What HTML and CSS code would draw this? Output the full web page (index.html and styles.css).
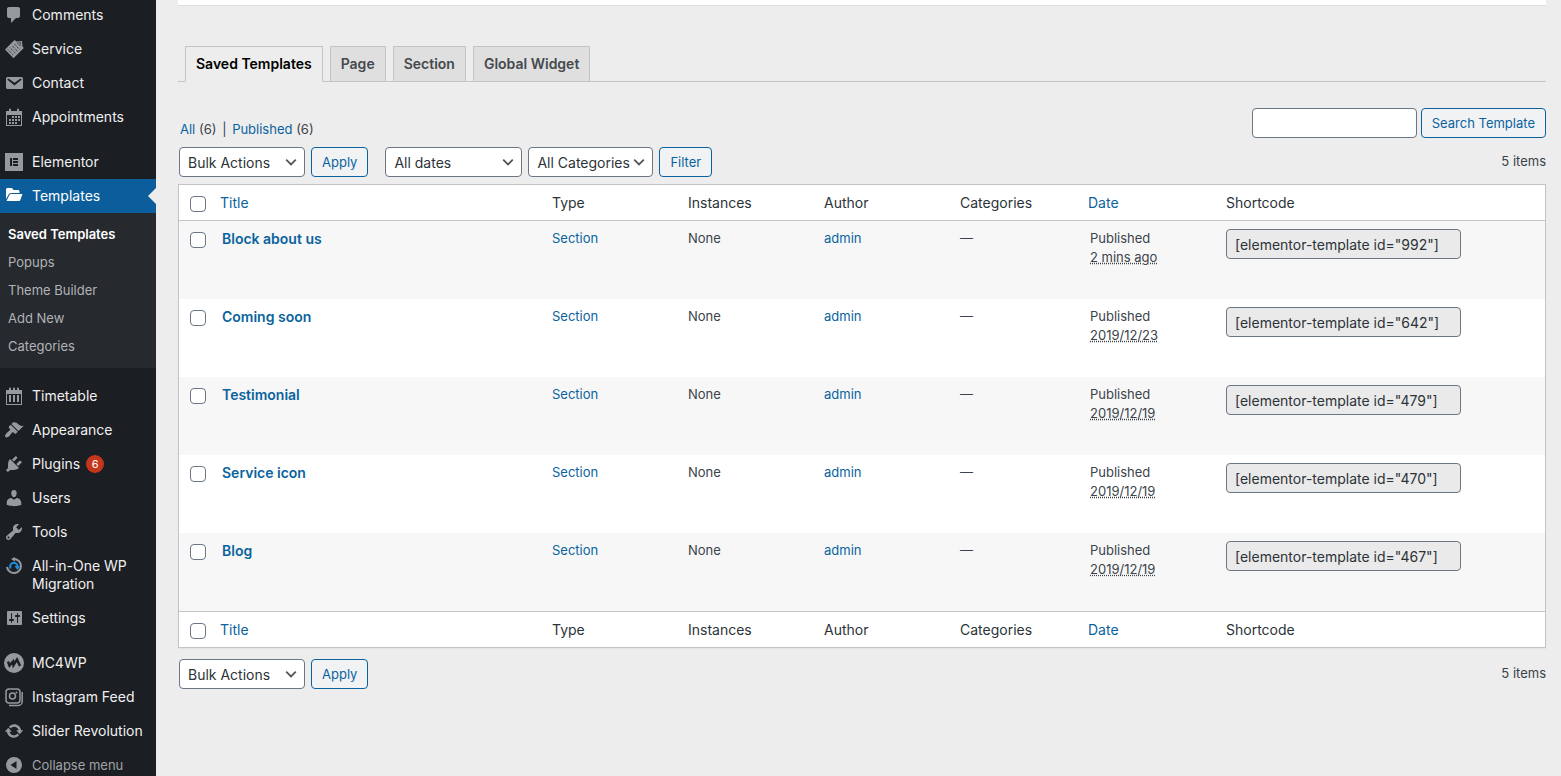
FILE: index.html
```
<!DOCTYPE html>
<html lang="en">

<head>
    <meta charset="UTF-8">
    <meta name="viewport" content="width=device-width, initial-scale=1.0">
    <title>Saved Templates</title>
    <link rel="stylesheet" href="styles.css">
</head>

<body>
    <nav class="sidebar">
        <ul class="menu">
            <li><a href="#"><svg class="icon" viewBox="0 0 20 20"><path d="M5 2h9c1.1 0 2 .9 2 2v7c0 1.1-.9 2-2 2h-2l-5 5v-5H5c-1.1 0-2-.9-2-2V4c0-1.1.9-2 2-2z"/></svg><span>Comments</span></a></li>
            <li><a href="#"><svg class="icon" viewBox="0 0 20 20"><path d="M1 10.500 10.500 1l2 1.500 5.500-.5.500 5.500 1.300 1.500L9.500 19.300z"/><path class="cut" d="M4 10.500l5.500 6M6.200 8.700l5.500 6M8.400 6.900l5.500 6M10.600 5.100l5.500 6M13.500 4l3-.5-.3 3.300z"/></svg><span>Service</span></a></li>
            <li><a href="#"><svg class="icon" viewBox="0 0 20 20"><path d="M3.870 4h13.250C18.370 4 19 4.590 19 5.790v8.420c0 1.190-.63 1.790-1.880 1.790H3.870c-1.250 0-1.880-.6-1.880-1.790V5.790c0-1.200.63-1.790 1.880-1.790zm6.620 8.600l6.740-5.530c.24-.2.430-.66.130-1.070-.29-.41-.82-.42-1.170-.17l-5.700 3.860L4.800 5.830c-.35-.25-.88-.24-1.170.17-.3.410-.11.870.130 1.070z"/></svg><span>Contact</span></a></li>
            <li><a href="#"><svg class="icon" viewBox="0 0 20 20"><path fill-rule="evenodd" d="M2 4h16v15H2zM3 8v10h14V8z"/><path d="M5 2.500a1 1 0 0 1 2 0V6H5zM13 2.500a1 1 0 0 1 2 0V6h-2zM8 9h2v2H8zM11 9h2v2h-2zM14 9h2v2h-2zM5 12h2v2H5zM8 12h2v2H8zM11 12h2v2h-2zM14 12h2v2h-2zM5 15h2v2H5zM8 15h2v2H8zM11 15h2v2h-2z"/></svg><span>Appointments</span></a></li>
            <li class="gap"><a href="#"><svg class="icon" viewBox="0 0 20 20"><path fill-rule="evenodd" d="M1 1h18v18H1zM6 6v8h2V6zM9 6v2h5V6zM9 9v2h5V9zM9 12v2h5v-2z"/></svg><span>Elementor</span></a></li>
            <li class="current">
                <a href="#"><svg class="icon" viewBox="0 0 20 20"><path d="M2 13V3.500C2 2.700 2.700 2 3.500 2H8l1.500 2H14c.8 0 1.500.7 1.500 1.500V7H7.500C6 7 5 7.700 4.300 9zM7.500 8H18.500L16.500 13.500C16.200 14.500 15.500 15 14.500 15H2.500L5.300 9.300C5.800 8.400 6.500 8 7.500 8z"/></svg><span>Templates</span></a>
                <ul class="submenu">
                    <li><a href="#" class="active">Saved Templates</a></li>
                    <li><a href="#">Popups</a></li>
                    <li><a href="#">Theme Builder</a></li>
                    <li><a href="#">Add New</a></li>
                    <li><a href="#">Categories</a></li>
                </ul>
            </li>
            <li class="gap"><a href="#"><svg class="icon" viewBox="0 0 20 20"><path fill-rule="evenodd" d="M2 4h16v15H2zM3 8v10h14V8z"/><path d="M5 2.500a1 1 0 0 1 2 0V5H5zM9 2.500a1 1 0 0 1 2 0V5H9zM13 2.500a1 1 0 0 1 2 0V5h-2zM5 9h2v7H5zM9 9h2v7H9zM13 9h2v7h-2z"/></svg><span>Timetable</span></a></li>
            <li><a href="#"><svg class="icon" viewBox="0 0 20 20"><path d="M14.480 11.060L7.410 3.990l1.500-1.500c.5-.56 2.300-.47 3.510.320 1.210.8 1.430 1.280 2.910 2.100 1.180.64 2.450 1.260 4.450.850zm-.71.710L6.700 4.700 4.930 6.470c-.39.39-.39 1.020 0 1.410l1.060 1.060c.39.39.39 1.030 0 1.420-.6.6-1.430 1.110-2.210 1.690-.35.26-.7.53-1.010.840C1.430 14.230.4 16.080 1.400 17.070c.99 1 2.840-.03 4.180-1.360.31-.31.58-.66.850-1.020.57-.78 1.080-1.610 1.690-2.210.39-.39 1.020-.39 1.410 0l1.060 1.060c.39.39 1.020.39 1.410 0z"/></svg><span>Appearance</span></a></li>
            <li><a href="#"><svg class="icon" viewBox="0 0 20 20"><path d="M13.110 4.360L9.870 7.600 8 5.730l3.240-3.240c.35-.34 1.050-.2 1.560.320.52.51.66 1.210.310 1.550zm-8 1.770l.91-1.120 9.010 9.010-1.190.840c-.71.71-2.630 1.160-3.820 1.160H6.140L4.900 17.260c-.59.59-1.540.59-2.120 0-.59-.58-.59-1.530 0-2.120l1.240-1.240v-3.880c0-1.130.4-3.190 1.090-3.890zm7.260 3.970l3.240-3.240c.34-.35 1.040-.21 1.550.310.52.51.66 1.210.310 1.550l-3.240 3.250z"/></svg><span>Plugins</span><span class="badge">6</span></a></li>
            <li><a href="#"><svg class="icon" viewBox="0 0 20 20"><path d="M10 9.250c-2.270 0-2.730-3.440-2.730-3.440C7 4.020 7.820 2 9.970 2c2.160 0 2.980 2.020 2.710 3.810 0 0-.41 3.440-2.680 3.440zm0 2.570L12.720 10c2.390 0 4.520 2.330 4.520 4.530v2.490s-3.650 1.130-7.240 1.130c-3.650 0-7.240-1.130-7.240-1.130v-2.490c0-2.250 1.940-4.480 4.470-4.480z"/></svg><span>Users</span></a></li>
            <li><a href="#"><svg class="icon" viewBox="0 0 20 20"><path d="M16.680 9.770c-1.340 1.340-3.300 1.670-4.950.99l-5.410 6.520c-.99.99-2.590.99-3.580 0s-.99-2.590 0-3.570l6.520-5.420c-.68-1.650-.35-3.610.99-4.950 1.280-1.280 3.120-1.620 4.720-1.060l-2.890 2.890 2.820 2.820 2.860-2.870c.53 1.580.18 3.390-1.080 4.650zM3.810 16.210c.4.39 1.040.39 1.430 0 .4-.4.4-1.040 0-1.430-.39-.4-1.030-.4-1.430 0-.39.39-.39 1.030 0 1.430z"/></svg><span>Tools</span></a></li>
            <li><a href="#"><svg class="icon" viewBox="0 0 20 20"><path class="ring" d="M10 3a7 7 0 1 1-7 8"/><path d="M11 1v4.500L7 3z"/><path class="ring-blue" d="M6.700 12.500A3.700 3.700 0 1 1 13.500 10.500"/><path class="blue" d="M10.500 10h5.500l-2.700 4z"/></svg><span>All-in-One WP Migration</span></a></li>
            <li><a href="#"><svg class="icon" viewBox="0 0 20 20"><path d="M18 16V4c0-.55-.45-1-1-1H4c-.55 0-1 .45-1 1v12c0 .55.45 1 1 1h13c.55 0 1-.45 1-1zM8 11h1c.55 0 1 .45 1 1s-.45 1-1 1H8v1.500c0 .28-.22.5-.5.5s-.5-.22-.5-.5V13H6c-.55 0-1-.45-1-1s.45-1 1-1h1V5.500c0-.28.22-.5.5-.5s.5.22.5.5V11zm5-2h-1c-.55 0-1-.45-1-1s.45-1 1-1h1V5.500c0-.28.22-.5.5-.5s.5.22.5.5V7h1c.55 0 1 .45 1 1s-.45 1-1 1h-1v5.500c0 .28-.22.5-.5.5s-.5-.22-.5-.5V9z"/></svg><span>Settings</span></a></li>
            <li class="gap"><a href="#"><svg class="icon" viewBox="0 0 20 20"><circle cx="10" cy="10" r="10"/><path class="mark" d="M4 8.500l1.500 4L9 8.500l.5 3.500L13 6.500l3 6.500"/></svg><span>MC4WP</span></a></li>
            <li><a href="#"><svg class="icon" viewBox="0 0 20 20"><rect class="line" x="2" y="2" width="14" height="14" rx="3"/><circle class="line" cx="8.500" cy="9" r="3"/><circle cx="12.500" cy="5.500" r="1"/><path class="line" d="M18.200 5v9.500a4 4 0 0 1-4 4H5"/></svg><span>Instagram Feed</span></a></li>
            <li><a href="#"><svg class="icon" viewBox="0 0 20 20"><path d="M10.200 3.280c3.530 0 6.430 2.610 6.920 6h2.080l-3.500 4-3.500-4h2.320c-.45-1.970-2.210-3.450-4.320-3.450-1.450 0-2.730.71-3.540 1.780L4.950 5.660C6.230 4.200 8.110 3.280 10.200 3.280zm-.4 13.440c-3.520 0-6.430-2.610-6.920-6H.8l3.500-4c1.170 1.330 2.330 2.670 3.500 4H5.480c.45 1.970 2.210 3.450 4.320 3.450 1.450 0 2.730-.71 3.540-1.780l1.710 1.950c-1.280 1.460-3.150 2.380-5.250 2.380z"/></svg><span>Slider Revolution</span></a></li>
            <li><button type="button" class="collapse"><svg class="icon" viewBox="0 0 20 20"><path fill-rule="evenodd" d="M10 2a8 8 0 1 1 0 16 8 8 0 0 1 0-16zM12.500 6l-6 4 6 4z"/></svg><span>Collapse menu</span></button></li>
        </ul>
    </nav>

    <main class="content">
        <div class="notice"></div>

        <nav class="tabs">
            <a href="#" class="tab tab-active">Saved Templates</a>
            <a href="#" class="tab">Page</a>
            <a href="#" class="tab">Section</a>
            <a href="#" class="tab">Global Widget</a>
        </nav>

        <div class="list-head">
            <div class="views"><a href="#">All</a> (6) <span class="sep">|</span> <a href="#">Published</a> (6)</div>
            <form class="search">
                <input type="search" class="search-input" aria-label="Search Template">
                <button type="button" class="button">Search Template</button>
            </form>
        </div>

        <div class="tablenav">
            <select class="bulk" aria-label="Bulk Actions">
                <option>Bulk Actions</option>
            </select>
            <button type="button" class="button">Apply</button>
            <select class="dates" aria-label="Filter by date">
                <option>All dates</option>
            </select>
            <select class="categories" aria-label="Filter by category">
                <option>All Categories</option>
            </select>
            <button type="button" class="button">Filter</button>
            <span class="count">5 items</span>
        </div>

        <table class="list">
            <thead>
                <tr>
                    <th class="col-check"><input type="checkbox" aria-label="Select all"></th>
                    <th class="col-title sortable"><a href="#">Title</a></th>
                    <th class="col">Type</th>
                    <th class="col">Instances</th>
                    <th class="col">Author</th>
                    <th class="col-categories">Categories</th>
                    <th class="col sortable"><a href="#">Date</a></th>
                    <th>Shortcode</th>
                </tr>
            </thead>
            <tbody>
                <tr>
                    <td class="col-check"><input type="checkbox" aria-label="Select Block about us"></td>
                    <td><a href="#" class="row-title">Block about us</a></td>
                    <td><a href="#">Section</a></td>
                    <td>None</td>
                    <td><a href="#">admin</a></td>
                    <td>—</td>
                    <td>Published<br><abbr title="2 mins ago">2 mins ago</abbr></td>
                    <td><input type="text" class="shortcode" aria-label="Shortcode" readonly value='[elementor-template id="992"]'></td>
                </tr>
                <tr>
                    <td class="col-check"><input type="checkbox" aria-label="Select Coming soon"></td>
                    <td><a href="#" class="row-title">Coming soon</a></td>
                    <td><a href="#">Section</a></td>
                    <td>None</td>
                    <td><a href="#">admin</a></td>
                    <td>—</td>
                    <td>Published<br><abbr title="2019/12/23">2019/12/23</abbr></td>
                    <td><input type="text" class="shortcode" aria-label="Shortcode" readonly value='[elementor-template id="642"]'></td>
                </tr>
                <tr>
                    <td class="col-check"><input type="checkbox" aria-label="Select Testimonial"></td>
                    <td><a href="#" class="row-title">Testimonial</a></td>
                    <td><a href="#">Section</a></td>
                    <td>None</td>
                    <td><a href="#">admin</a></td>
                    <td>—</td>
                    <td>Published<br><abbr title="2019/12/19">2019/12/19</abbr></td>
                    <td><input type="text" class="shortcode" aria-label="Shortcode" readonly value='[elementor-template id="479"]'></td>
                </tr>
                <tr>
                    <td class="col-check"><input type="checkbox" aria-label="Select Service icon"></td>
                    <td><a href="#" class="row-title">Service icon</a></td>
                    <td><a href="#">Section</a></td>
                    <td>None</td>
                    <td><a href="#">admin</a></td>
                    <td>—</td>
                    <td>Published<br><abbr title="2019/12/19">2019/12/19</abbr></td>
                    <td><input type="text" class="shortcode" aria-label="Shortcode" readonly value='[elementor-template id="470"]'></td>
                </tr>
                <tr>
                    <td class="col-check"><input type="checkbox" aria-label="Select Blog"></td>
                    <td><a href="#" class="row-title">Blog</a></td>
                    <td><a href="#">Section</a></td>
                    <td>None</td>
                    <td><a href="#">admin</a></td>
                    <td>—</td>
                    <td>Published<br><abbr title="2019/12/19">2019/12/19</abbr></td>
                    <td><input type="text" class="shortcode" aria-label="Shortcode" readonly value='[elementor-template id="467"]'></td>
                </tr>
            </tbody>
            <tfoot>
                <tr>
                    <th class="col-check"><input type="checkbox" aria-label="Select all"></th>
                    <th class="sortable"><a href="#">Title</a></th>
                    <th>Type</th>
                    <th>Instances</th>
                    <th>Author</th>
                    <th>Categories</th>
                    <th class="sortable"><a href="#">Date</a></th>
                    <th>Shortcode</th>
                </tr>
            </tfoot>
        </table>

        <div class="tablenav tablenav-bottom">
            <select class="bulk" aria-label="Bulk Actions">
                <option>Bulk Actions</option>
            </select>
            <button type="button" class="button">Apply</button>
            <span class="count">5 items</span>
        </div>
    </main>
</body>

</html>
```
FILE: styles.css
```
* {
    box-sizing: border-box;
}

body {
    margin: 0;
    display: flex;
    height: 100vh;
    overflow: hidden;
    background: #ededed;
    color: #3c434a;
    font-family: Inter, "Liberation Sans", sans-serif;
    font-size: 13px;
    line-height: 19px;
}

a {
    color: #0a639e;
    text-decoration: none;
}

ul {
    list-style: none;
    margin: 0;
    padding: 0;
}

/* sidebar */
.sidebar {
    width: 156px;
    flex-shrink: 0;
    background: #1b1e22;
}

.menu {
    margin-top: -2px;
}

.menu > li > a,
.collapse {
    display: flex;
    width: 100%;
    padding: 8px 8px 8px 4px;
    color: #f0f0f1;
    font-size: 14px;
    line-height: 18px;
}

.menu .collapse {
    border: 0;
    background: none;
    font-family: inherit;
    color: #a0a3a8;
    font-size: 13px;
    text-align: left;
}

.gap {
    margin-top: 11px;
}

.icon {
    width: 20px;
    height: 20px;
    margin: -1px 8px -1px 0;
    flex-shrink: 0;
    fill: #969a9f;
}

.icon .cut,
.icon .mark {
    fill: none;
    stroke: #1b1e22;
}

.icon .cut {
    stroke-dasharray: 1 1;
}

.icon .mark {
    stroke-width: 2.500;
}

.icon .ring,
.icon .ring-blue,
.icon .line {
    fill: none;
    stroke: #969a9f;
    stroke-width: 2;
}

.icon .line {
    stroke-width: 1.500;
}

.icon .ring-blue {
    stroke: #1d8fe0;
}

.icon .blue {
    fill: #1d8fe0;
}

.menu > .current > a {
    position: relative;
    background: #0b5e9b;
    color: #fff;
}

.current .icon {
    fill: #fff;
}

.current > a::after {
    content: "";
    position: absolute;
    right: 0;
    top: 9px;
    border: 8px solid transparent;
    border-left: 0;
    border-right-color: #ededed;
}

.submenu {
    padding: 7px 0 8px;
    background: #26292e;
}

.submenu a {
    display: block;
    padding: 5px 8px;
    color: #b0b3b7;
    font-size: 13px;
    line-height: 18px;
}

.submenu .active {
    color: #fff;
    font-weight: 600;
}

.badge {
    min-width: 18px;
    height: 18px;
    margin-left: 6px;
    border-radius: 9px;
    background: #c4371b;
    color: #fff;
    font-size: 11px;
    text-align: center;
}

/* content */
.content {
    flex: 1;
    min-width: 0;
    padding: 0 15px 0 22px;
}

.notice {
    height: 6px;
    background: #fff;
    border-bottom: 1px solid #dfdfe0;
}

.tabs {
    display: flex;
    gap: 7px;
    margin-top: 40px;
    padding-left: 7px;
    border-bottom: 1px solid #c3c4c7;
}

.tab {
    margin-bottom: -1px;
    padding: 5px 10px;
    border: 1px solid #c3c4c7;
    background: #dfdfdf;
    color: #46494d;
    font-size: 14px;
    font-weight: 600;
    line-height: 24px;
}

.tab-active {
    border-bottom-color: #ededed;
    background: #ededed;
    color: #000;
}

.list-head {
    display: flex;
    justify-content: space-between;
    align-items: flex-end;
    margin: 26px 0 9px;
}

.views {
    padding-left: 2px;
    line-height: 17px;
}

.sep {
    margin: 0 2px;
}

.search {
    display: flex;
    gap: 4px;
}

.button,
select,
.search-input,
.shortcode {
    height: 30px;
    margin: 0;
    border: 1px solid #6c7684;
    border-radius: 4px;
    background: #fff;
    color: #2c3338;
    font-family: inherit;
    font-size: 14px;
}

.search-input {
    width: 165px;
    padding: 0 8px;
}

.button {
    padding: 0 10px;
    border-color: #0a639e;
    background: #f1f2f4;
    color: #0a639e;
    font-size: 13px;
}

.tablenav {
    display: flex;
    gap: 6px;
    margin: 0 0 7px 1px;
}

.tablenav-bottom {
    margin-top: 11px;
}

select {
    appearance: none;
    padding: 0 20px 0 8px;
    background: #fff url("data:image/svg+xml,%3Csvg xmlns='http://www.w3.org/2000/svg' viewBox='0 0 20 20'%3E%3Cpath d='M4 7l6 6 6-6' fill='none' stroke='%23555' stroke-width='2.200'/%3E%3C/svg%3E") no-repeat right 5px center / 16px 16px;
}

.bulk {
    width: 126px;
}

.dates {
    width: 137px;
    margin-left: 11px;
}

.categories {
    width: 125px;
}

.count {
    margin-left: auto;
    line-height: 29px;
}

/* templates table */
.list {
    width: 100%;
    table-layout: fixed;
    border: 1px solid #c3c4c7;
    border-spacing: 0;
    background: #fff;
    box-shadow: 0 1px 1px rgba(0, 0, 0, .04);
}

.list th {
    padding: 8px 10px;
    color: #2c3338;
    font-size: 14px;
    font-weight: 400;
    line-height: 19px;
    text-align: left;
}

.list .sortable {
    padding-left: 8px;
}

.list thead th {
    border-bottom: 1px solid #c3c4c7;
}

.list tfoot th {
    border-top: 1px solid #c3c4c7;
}

.list td {
    height: 78px;
    padding: 8px 10px;
    vertical-align: top;
}

.list tbody tr:nth-child(odd) {
    background: #f7f7f7;
}

.list .col-title {
    width: 330px;
}

.list .col {
    width: 136px;
}

.list .col-categories {
    width: 130px;
}

.list .col-check {
    width: 33px;
    padding: 11px 0 0 11px;
    vertical-align: top;
}

.col-check input {
    appearance: none;
    display: block;
    width: 16px;
    height: 16px;
    margin: 0;
    border: 1px solid #6c7684;
    border-radius: 4px;
    background: #fff;
}

.row-title {
    font-size: 14px;
    font-weight: 600;
}

abbr {
    text-decoration: underline dotted;
}

.shortcode {
    width: 235px;
    padding: 0 8px;
    background: #eaeaea;
}
```
